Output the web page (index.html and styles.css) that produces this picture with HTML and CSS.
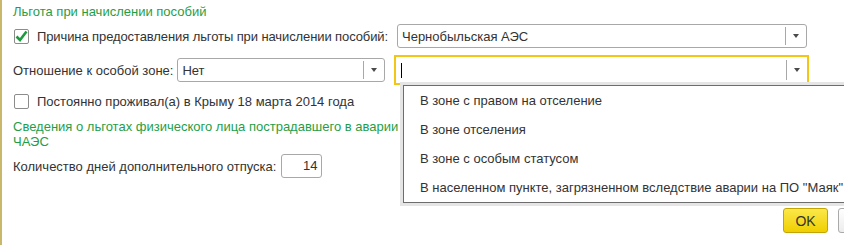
FILE: index.html
```html
<!DOCTYPE html>
<html lang="ru">
<head>
  <meta charset="UTF-8">
  <title>Льгота при начислении пособий</title>
  <link rel="stylesheet" href="styles.css">
</head>
<body>
  <div class="form">
    <div class="group-title">Льгота при начислении пособий</div>

    <div class="row row-first">
      <div class="left">
        <span class="check checked">
          <svg width="13" height="12" viewBox="0 0 13 12"><path d="M1.5 6.5 L5 10 L11.5 1.5" fill="none" stroke="#1a9c3e" stroke-width="2.6"/></svg>
        </span>
        <span class="label tight">Причина предоставления льготы при начислении пособий:</span>
      </div>
      <div class="select wide">
        <span class="value">Чернобыльская АЭС</span>
        <span class="drop"><i class="arrow"></i></span>
      </div>
    </div>

    <div class="row row-zone">
      <div class="left">
        <span class="label">Отношение к особой зоне:</span>
        <div class="select narrow">
          <span class="value">Нет</span>
          <span class="drop"><i class="arrow"></i></span>
        </div>
      </div>
      <div class="select wide focused">
        <span class="value"><i class="caret"></i></span>
        <span class="drop"><i class="arrow"></i></span>
      </div>
    </div>

    <div class="row row-crimea">
      <span class="check"></span>
      <span class="label">Постоянно проживал(а) в Крыму 18 марта 2014 года</span>
    </div>

    <div class="group-title second">Сведения о льготах физического лица пострадавшего в аварии ЧАЭС</div>

    <div class="row row-days">
      <span class="label">Количество дней дополнительного отпуска:</span>
      <div class="number">14</div>
    </div>

    <div class="buttons">
      <button class="btn ok">OK</button>
      <button class="btn cancel" aria-label="Отмена"></button>
    </div>
  </div>

  <ul class="popup">
    <li>В зоне с правом на отселение</li>
    <li>В зоне отселения</li>
    <li>В зоне с особым статусом</li>
    <li>В населенном пункте, загрязненном вследствие аварии на ПО "Маяк"</li>
  </ul>
</body>
</html>
```

FILE: styles.css
```css
* {
  box-sizing: border-box;
  margin: 0;
  padding: 0;
}
html, body {
  overflow: hidden;
}
body {
  font-family: "Liberation Sans", Arial, sans-serif;
  font-size: 13px;
  color: #333;
  background: #fff;
  width: 844px;
  height: 245px;
  position: relative;
}
.form {
  border-left: 2px solid #c9b76c;
  height: 245px;
  padding: 4px 0 0 11px;
}
.group-title {
  color: #1f9e48;
  line-height: 16px;
}
.group-title.second {
  width: 390px;
  line-height: 15px;
  margin-top: 6px;
}
.row {
  display: flex;
  align-items: center;
  height: 24px;
}
.row-first {
  margin-top: 4px;
}
.row-zone {
  margin-top: 10px;
}
.row-crimea {
  margin-top: 7px;
}
.row-days {
  margin-top: 5px;
}
.left {
  display: flex;
  align-items: center;
  width: 384px;
}
.check {
  width: 15px;
  height: 15px;
  border: 1px solid #8c8c8c;
  border-radius: 2px;
  margin: 0 8px 0 1px;
  display: flex;
  align-items: center;
  justify-content: center;
  flex: none;
}
.label {
  white-space: nowrap;
}
.tight {
  letter-spacing: -0.1px;
}
.select {
  display: flex;
  align-items: stretch;
  height: 24px;
  border: 1px solid #a8a8a8;
  border-radius: 3px;
  background: #fff;
}
.select .value {
  flex: 1;
  padding-left: 4px;
  display: flex;
  align-items: center;
}
.select .drop {
  width: 21px;
  border-left: 1px solid #a8a8a8;
  margin: 2px 0;
  display: flex;
  align-items: center;
  justify-content: center;
}
.arrow {
  width: 0;
  height: 0;
  border-left: 3.5px solid transparent;
  border-right: 3.5px solid transparent;
  border-top: 4px solid #4a4a4a;
}
.narrow {
  width: 208px;
  margin-left: 4px;
}
.wide {
  width: 410px;
}
.focused {
  width: 415px;
  height: 30px;
  margin-left: -3px;
  border: 2px solid #f3c614;
  border-radius: 0;
}
.focused .value {
  padding-left: 5px;
}
.focused .drop {
  margin: 3px 0 3px;
}
.caret {
  width: 1px;
  height: 15px;
  background: #000;
}
.row-days .label {
  margin-right: 5px;
}
.number {
  width: 41px;
  height: 24px;
  border: 1px solid #a8a8a8;
  border-radius: 3px;
  text-align: right;
  padding-right: 4px;
  line-height: 22px;
}
.buttons {
  display: flex;
  gap: 10px;
  margin: 30px 0 0 770px;
}
.btn {
  font-family: inherit;
  font-size: 14px;
  height: 25px;
  border: 1px solid #a9a9a9;
  border-radius: 3px;
  background: linear-gradient(#ffffff, #ececec);
  color: #333;
  flex: none;
}
.btn.ok {
  width: 45px;
  border-color: #c2a500;
  background: linear-gradient(#fbe84a, #f0cf00);
}
.btn.cancel {
  width: 70px;
}
.popup {
  position: absolute;
  left: 403px;
  top: 85px;
  width: 470px;
  list-style: none;
  background: #fff;
  border: 1px solid #6d6d6d;
  box-shadow: 0 0 0 3px #e5e5e5;
}
.popup li {
  height: 29px;
  line-height: 29px;
  padding-left: 16px;
  white-space: nowrap;
}
```
